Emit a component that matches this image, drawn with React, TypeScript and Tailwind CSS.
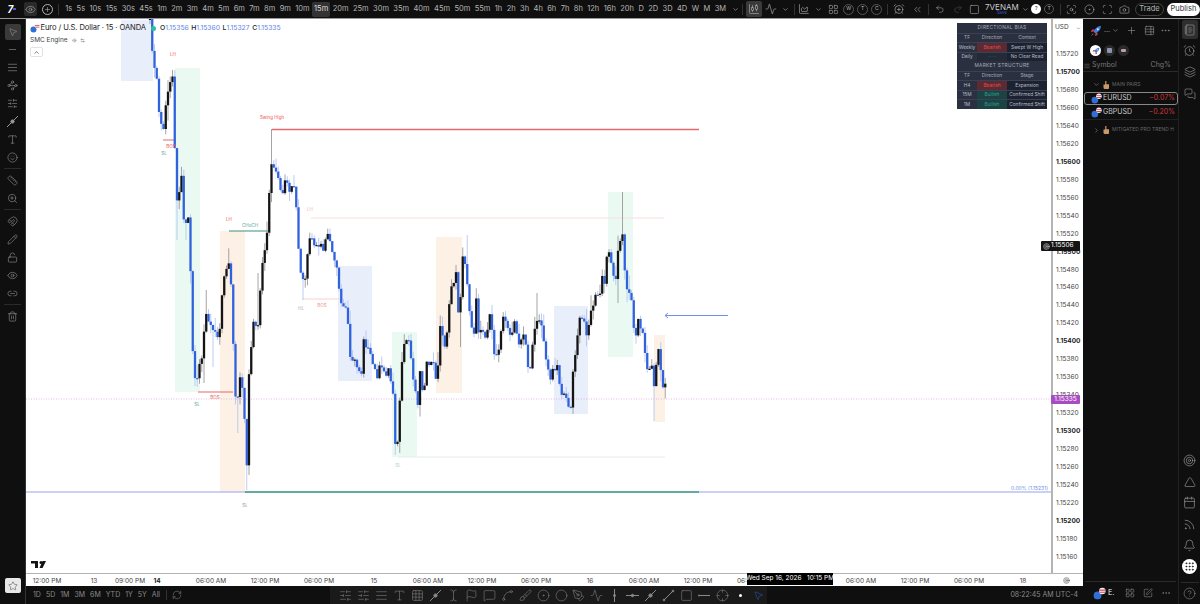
import {
  Activity, AlarmClock, AlarmClockPlus, AlignJustify, Bell, Brush, Calendar, Camera, ChartArea, ChartCandlestick,
  ChevronDown, ChevronRight, ChevronUp, ChevronsLeft, CircleDot, CircleHelp, Eye, Flag, Grid3x3, Grip, Layers,
  LayoutGrid, Link2, LockOpen, Magnet, MessageSquare, MessagesSquare, Minus, MousePointer2, NotebookText, PenTool,
  Pencil, Plus, Redo2, Ruler, Scan, ScanSearch, Settings2, SlidersHorizontal, Smile, Square, SquarePen, Star,
  TableProperties, Target, Trash2, Triangle, Type, Undo2, Waypoints, ZoomIn, Ellipsis, Rss, Spline,
  Crosshair, RefreshCw, TextCursor, Circle
} from "lucide-react";

const frames = "1s 5s 10s 15s 30s 45s 1m 2m 3m 4m 5m 6m 7m 8m 9m 10m 15m 20m 25m 30m 35m 40m 45m 50m 55m 1h 2h 3h 4h 6h 7h 8h 12h 16h 20h D 2D 3D 4D W M 3M".split(" ");

// price path traced from the chart, [x, y] in page pixels
const path: number[][] = [
  [150,20],[152,40],[153,70],[156,73],[158,87],[159,113],[163,133],[165,113],[168,93],[172,73],[174,72],[175,170],[177,203],[182,170],[184,227],[188,212],[190,260],[192,300],[193,370],[197,382],[198,365],[203,357],[205,312],[208,320],[212,333],[217,332],[219,337],[222,297],[223,277],[225,277],[230,258],[232,303],[233,333],[235,393],[237,408],[239,373],[243,387],[247,473],[248,385],[253,323],[258,328],[262,267],[266,247],[270,180],[272,160],[275,168],[279,183],[282,200],[285,183],[290,190],[295,190],[297,223],[300,273],[303,280],[306,280],[308,247],[311,232],[313,250],[320,245],[323,250],[327,237],[331,240],[333,260],[337,270],[340,303],[347,310],[350,353],[357,367],[362,372],[363,335],[368,350],[377,377],[378,368],[387,373],[388,367],[393,392],[395,440],[398,445],[400,393],[403,352],[408,335],[415,390],[418,402],[420,373],[423,393],[427,363],[430,372],[432,353],[436,383],[438,362],[440,327],[445,345],[448,323],[451,287],[456,275],[457,312],[460,307],[462,257],[466,267],[470,315],[474,337],[476,293],[479,337],[481,325],[486,340],[489,313],[493,340],[495,360],[500,342],[502,313],[508,330],[512,333],[515,323],[519,347],[525,328],[527,367],[531,367],[534,330],[537,318],[540,318],[543,333],[546,362],[550,377],[554,367],[558,365],[560,388],[565,400],[572,407],[573,372],[577,347],[578,322],[582,318],[587,333],[592,307],[595,298],[600,293],[602,278],[606,287],[607,248],[610,250],[613,278],[617,275],[618,247],[623,235],[624,268],[628,293],[631,287],[632,312],[635,343],[637,320],[642,328],[645,352],[648,375],[652,363],[655,398],[657,345],[660,360],[662,387],[665,380],[666,398]
];

const wickFix: { x: number; top?: number; bottom?: number }[] = [
  { x: 272, top: 129 }, { x: 622, top: 192 }, { x: 247, bottom: 490 }, { x: 468, top: 235 }, { x: 460, bottom: 347 },
  { x: 536, top: 293 }, { x: 257, top: 273 }, { x: 207, top: 290 }, { x: 205, bottom: 383 }, { x: 213, bottom: 367 },
  { x: 237, bottom: 433 }, { x: 233, top: 320 }, { x: 302, bottom: 300 }, { x: 654, bottom: 421 }, { x: 185, bottom: 240 },
  { x: 178, top: 160 }, { x: 178, bottom: 240 }, { x: 395, bottom: 455 }, { x: 572, bottom: 414 }, { x: 617, bottom: 303 }
];

function rnd(i: number) {
  const v = Math.sin(i * 12.9898) * 43758.5453;
  return v - Math.floor(v);
}

function yAt(x: number) {
  for (let i = 1; i < path.length; i++) {
    if (x <= path[i][0]) {
      const [x0, y0] = path[i - 1];
      const [x1, y1] = path[i];
      return y0 + ((y1 - y0) * (x - x0)) / Math.max(x1 - x0, 0.01);
    }
  }
  return path[path.length - 1][1];
}

const candles = (() => {
  const out: { x: number; o: number; c: number; top: number; bottom: number }[] = [];
  let prev = 20;
  for (let i = 0; 150 + i * 2.25 <= 666; i++) {
    const x = 150 + i * 2.25;
    const c = yAt(x) + (rnd(i) - 0.5) * 8;
    const lo = Math.min(prev, c);
    const hi = Math.max(prev, c);
    let top = lo - rnd(i + 300) * rnd(i + 500) * 16;
    let bottom = hi + rnd(i + 700) * rnd(i + 900) * 16;
    for (const f of wickFix) {
      if (Math.abs(f.x - x) < 1.2) {
        if (f.top) top = f.top;
        if (f.bottom) bottom = f.bottom;
      }
    }
    out.push({ x, o: prev, c, top: Math.max(top, 19), bottom });
    prev = c;
  }
  return out;
})();

const zones = [
  { x: 121, y: 20, w: 32, h: 61, fill: "#e9eefb" },
  { x: 175, y: 68, w: 25, h: 324, fill: "#eafaf3" },
  { x: 220, y: 231, w: 25, h: 261, fill: "#fdf0e5" },
  { x: 338, y: 266, w: 34, h: 115, fill: "#e9eefb" },
  { x: 392, y: 332, w: 25, h: 125, fill: "#eafaf3" },
  { x: 436, y: 237, w: 26, h: 156, fill: "#fdf0e5" },
  { x: 554, y: 306, w: 34, h: 108, fill: "#e9eefb" },
  { x: 608, y: 192, w: 25, h: 165, fill: "#eafaf3" },
  { x: 654, y: 335, w: 11, h: 87, fill: "#fdf0e5" }
];

const labels = [
  { x: 173, y: 56, t: "LH", c: "#ef5350" },
  { x: 272, y: 119, t: "Swing High", c: "#ef5350" },
  { x: 171, y: 148, t: "BOS", c: "#ef5350" },
  { x: 164, y: 155, t: "SL", c: "#4aa89a" },
  { x: 229, y: 221, t: "LH", c: "#ef5350" },
  { x: 250, y: 227, t: "CHoCH", c: "#4aa89a" },
  { x: 310, y: 211, t: "LH", c: "#f3b4b2" },
  { x: 301, y: 310, t: "HL", c: "#a8b0b8" },
  { x: 322, y: 307, t: "BOS", c: "#f08a88" },
  { x: 215, y: 399, t: "BOS", c: "#ef5350" },
  { x: 197, y: 406, t: "SL", c: "#4aa89a" },
  { x: 398, y: 467, t: "SL", c: "#a9d0c8" },
  { x: 245, y: 507, t: "SL", c: "#88a0a0" }
];

const prices = Array.from({ length: 29 }, (_, i) => 115720 - i * 20);

const ticks = [
  { x: 47, t: "12:00 PM" }, { x: 94, t: "13" }, { x: 130, t: "09:00 PM" }, { x: 157, t: "14", b: true }, { x: 211, t: "06:00 AM" },
  { x: 265, t: "12:00 PM" }, { x: 319, t: "06:00 PM" }, { x: 374, t: "15" }, { x: 428, t: "06:00 AM" }, { x: 482, t: "12:00 PM" },
  { x: 536, t: "06:00 PM" }, { x: 590, t: "16" }, { x: 644, t: "06:00 AM" }, { x: 698, t: "12:00 PM" }, { x: 752, t: "06:00 PM" },
  { x: 861, t: "06:00 AM" }, { x: 915, t: "12:00 PM" }, { x: 969, t: "06:00 PM" }, { x: 1023, t: "18" }
];

type Glyph = { size?: number; strokeWidth?: number };

function LineDots(_: Glyph) {
  return (
    <svg width="13" height="13" viewBox="0 0 13 13" fill="none" stroke="currentColor" strokeWidth="1">
      <path d="M1 12 12 1" />
      <circle cx="6.5" cy="6.5" r="1.6" fill="currentColor" />
    </svg>
  );
}

function PlainLine(_: Glyph) {
  return (
    <svg width="13" height="13" viewBox="0 0 13 13" fill="none" stroke="currentColor" strokeWidth="1">
      <path d="M2 11 11 2" />
      <circle cx="2" cy="11" r="0.9" />
      <circle cx="11" cy="2" r="0.9" />
    </svg>
  );
}

function DashDash(_: Glyph) {
  return (
    <svg width="13" height="13" viewBox="0 0 13 13" fill="none" stroke="currentColor" strokeWidth="1">
      <path d="M1 6.5h11" />
      <circle cx="1" cy="6.5" r="0.6" />
    </svg>
  );
}

function Vert(_: Glyph) {
  return (
    <svg width="13" height="13" viewBox="0 0 13 13" fill="none" stroke="currentColor" strokeWidth="1">
      <path d="M6.5 0v13" />
      <circle cx="6.5" cy="6.5" r="1" fill="currentColor" />
    </svg>
  );
}

function Hori(_: Glyph) {
  return (
    <svg width="13" height="13" viewBox="0 0 13 13" fill="none" stroke="currentColor" strokeWidth="1">
      <path d="M0 6.5h13" />
      <circle cx="6.5" cy="6.5" r="1.2" fill="currentColor" />
    </svg>
  );
}

function Pair({ size = 11 }: { size?: number }) {
  return (
    <svg width={size} height={size} viewBox="0 0 12 12" className="shrink-0">
      <circle cx="4.2" cy="7.8" r="3.6" fill="#2f6fd8" />
      <circle cx="8.6" cy="3.6" r="3" fill="#f4f4f4" />
      <path d="M5.8 2.4h5.6v1H5.8zM5.8 4.4h5.4v1H5.8z" fill="#d8404a" />
    </svg>
  );
}

function Rocket({ size = 12 }: { size?: number }) {
  return (
    <svg width={size} height={size} viewBox="0 0 12 12" className="shrink-0">
      <path d="M11 1C8 1 5 3 3.5 6.5L5.5 8.5C9 7 11 4 11 1Z" fill="#3f7be0" />
      <path d="M3.5 6.5 1 7l1-2.5h2.5ZM5.5 8.5 5 11l2.5-1V7.5Z" fill="#d8404a" />
      <circle cx="7.8" cy="4.2" r="1" fill="#e8eefc" />
      <path d="M3 8.5 1 11l2.5-2Z" fill="#f0a030" />
    </svg>
  );
}

function Hand() {
  return (
    <svg width="6" height="8" viewBox="0 0 6 8" className="shrink-0">
      <path d="M2.2 0h1.2v3.2H6V7a1 1 0 0 1-1 1H2a1.5 1.5 0 0 1-1.5-1.5V3.5h1.7Z" fill="#c99a68" />
    </svg>
  );
}

function ChartDrawing() {
  return (
    <svg className="absolute inset-0" width="1025" height="554" viewBox="26 19 1025 554">
      {zones.map((z) => (
        <rect key={z.x} x={z.x} y={z.y} width={z.w} height={z.h} fill={z.fill} />
      ))}
      <path d="M26 399h1025" stroke="#d9a8e0" strokeWidth="0.8" strokeDasharray="1 1.5" />
      <path d="M311 218h353" stroke="#f6dedd" />
      <path d="M398 457h267" stroke="#e3ece9" />
      <path d="M272 129.5h427" stroke="#e5686a" strokeWidth="1.5" />
      <path d="M163 140h11M198 392h35" stroke="#e5686a" strokeWidth="1.2" />
      <path d="M302 299h38" stroke="#f6d0cf" />
      <path d="M229 231h41" stroke="#3f8f7c" strokeWidth="1.2" />
      <path d="M26 492h220M699 492h352" stroke="#93a4ee" strokeWidth="1.2" />
      <path d="M245 492h454" stroke="#2f8f7c" strokeWidth="1.4" />
      <path d="M665 315.5h63M668 313l-3 2.5 3 2.5" stroke="#6f8fe8" fill="none" />
      {candles.map((k) => {
        const up = k.c < k.o;
        return (
          <g key={k.x}>
            <path d={"M" + k.x + " " + k.top + "V" + k.bottom} stroke={up ? "#9a9a9a" : "#b4c6f2"} strokeWidth="0.9" />
            <rect
              x={k.x - 1.15}
              y={Math.min(k.o, k.c)}
              width="2.3"
              height={Math.max(Math.abs(k.o - k.c), 1.2)}
              fill={up ? "#141414" : "#2f62dc"}
            />
          </g>
        );
      })}
      {labels.map((l) => (
        <text key={l.x + l.t} x={l.x} y={l.y} fontSize="4.5" fill={l.c} textAnchor="middle">
          {l.t}
        </text>
      ))}
      <text x="1048" y="490" fontSize="5" fill="#6f8fe8" textAnchor="end">
        0.00% (1.15231)
      </text>
      <path d="M31 561h7v7h-3v-4.5h-4ZM39.5 568l3-7h3.5l-3.5 7Z" fill="#131313" />
      <circle cx="41" cy="562.5" r="1.5" fill="#131313" />
    </svg>
  );
}

function BiasTable() {
  const cell = "flex items-center justify-center h-full";
  const row = "grid grid-cols-[20px_30px_40px] h-[9.5px] border-t border-[#3a4152]";
  const head = "h-[9.5px] flex items-center justify-center bg-[#2a3040] text-[#a8adb8] tracking-[0.3px]";
  const data = [
    { h: "DIRECTIONAL BIAS", third: "Context", rows: [["Weekly", "Bearish", "Swept W High"], ["Daily", "----", "No Clear Read"]] },
    { h: "MARKET STRUCTURE", third: "Stage", rows: [["H4", "Bearish", "Expansion"], ["15M", "Bullish", "Confirmed Shift"], ["1M", "Bullish", "Confirmed Shift"]] }
  ];
  return (
    <div className="absolute right-[4px] top-[4px] w-[90px] bg-[#1c2230] text-[4.8px] text-[#b8bcc6] leading-none">
      {data.map((d) => (
        <div key={d.h}>
          <div className={head}>{d.h}</div>
          <div className={row + " bg-[#2a3040] text-[#a8adb8]"}>
            <div className={cell}>TF</div>
            <div className={cell}>Direction</div>
            <div className={cell}>{d.third}</div>
          </div>
          {d.rows.map((r) => (
            <div key={r[0]} className={row}>
              <div className={cell + " bg-[#2a3040]"}>{r[0]}</div>
              <div
                className={
                  cell +
                  (r[1] === "Bearish"
                    ? " bg-[#5c2a33] text-[#e0504e]"
                    : r[1] === "Bullish"
                      ? " bg-[#1c4244] text-[#2ca58d]"
                      : " bg-[#232a38] text-[#4a5060]")
                }
              >
                {r[1]}
              </div>
              <div className={cell}>{r[2]}</div>
            </div>
          ))}
        </div>
      ))}
    </div>
  );
}

function Legend() {
  return (
    <div className="absolute left-[4px] top-[3px] text-[#222]">
      <div className="flex items-center h-[12px] whitespace-nowrap">
        <Pair size={10} />
        <span className="ml-[0.5px] text-[7.6px] tracking-[-0.1px]">Euro / U.S. Dollar · 15 · OANDA</span>
        <span className="ml-[5px] mr-[4px] w-[5px] h-[5px] rounded-full bg-[#2cbfa0]" />
        <div className="flex gap-[2.5px] text-[6.8px] font-medium">
          <span>O<span className="text-[#5f86e8] font-normal">1.15356</span></span>
          <span>H<span className="text-[#5f86e8] font-normal">1.15360</span></span>
          <span>L<span className="text-[#5f86e8] font-normal">1.15327</span></span>
          <span>C<span className="text-[#5f86e8] font-normal">1.15335</span></span>
        </div>
      </div>
      <div className="mt-[1px] flex items-center gap-[3px] h-[11px] text-[6.5px] text-[#444]">
        <span>SMC Engine</span>
        <Eye size={5} className="ml-[1px] text-[#777]" />
        <Settings2 size={5} className="text-[#777]" />
      </div>
      <div className="mt-[1px] w-[13px] h-[10px] border border-[#e2e2e2] rounded-[2px] bg-white flex items-center justify-center">
        <ChevronUp size={7} />
      </div>
    </div>
  );
}

function PriceAxis() {
  return (
    <div className="relative w-[32px] border-l-2 border-[#b4b4b4] bg-white text-[6.5px] text-[#444]">
      <div className="h-[18px] flex items-center justify-between px-[2px] text-[6.5px]">
        <span>USD</span>
        <ChevronDown size={5} />
      </div>
      <div className="mt-[9px]">
        {prices.map((p) => (
          <div key={p} className={"h-[17.96px] flex items-center pl-[3px] " + (p % 100 === 0 ? "font-bold text-[#222]" : "")}>
            {(p / 100000).toFixed(5)}
          </div>
        ))}
      </div>
      <div className="absolute left-[-12px] top-[222px] w-[39px] h-[10px] bg-[#141414] text-white rounded-[1px] flex items-center">
        <Target size={7} className="mx-[1.5px] text-[#bbb]" />
        <span>1.15506</span>
      </div>
      <div className="absolute left-[-2px] top-[376px] w-[29px] h-[9px] bg-[#a84cc2] text-white rounded-[1px] flex items-center justify-center">
        1.15335
      </div>
    </div>
  );
}

function TimeAxis() {
  return (
    <div className="relative h-[13px] border-t border-[#b4b4b4] bg-white text-[6.5px] text-[#444]">
      {ticks.map((t) => (
        <span
          key={t.x}
          className={"absolute top-[3px] -translate-x-1/2 whitespace-nowrap " + (t.b ? "font-bold text-[#222]" : "")}
          style={{ left: t.x - 26 }}
        >
          {t.t}
        </span>
      ))}
      <div className="absolute left-[721px] top-[-1px] w-[86px] h-[12px] bg-black text-white flex items-center justify-center whitespace-nowrap">
        Wed Sep 16, 2026 &nbsp; 10:15 PM
      </div>
      <Target size={7} className="absolute left-[1037px] top-[3px] text-[#666]" />
    </div>
  );
}

function TopBar() {
  return (
    <div className="h-[19px] shrink-0 flex items-center bg-[#0f0f0f] border-b border-[#9a9a9a] text-[#b4b4b4] text-[7.5px] whitespace-nowrap">
      <div className="w-[18px] ml-[3px] flex items-center justify-center text-white font-bold italic text-[10px]">
        7<span className="w-[3px] h-[2px] bg-[#2f62dc]" />
      </div>
      <div className="ml-[3px] w-[14px] h-[14px] bg-[#2a2a2a] rounded-[2px] flex items-center justify-center">
        <Eye size={11} strokeWidth={1.25} />
      </div>
      <div className="ml-[5px] w-[11px] h-[11px] rounded-full border border-[#b4b4b4] flex items-center justify-center">
        <Plus size={7} />
      </div>
      <div className="ml-[5px] w-px h-[11px] bg-[#333]" />
      <div className="ml-[4px] flex items-center gap-[0.4px]">
        {frames.map((f) => (
          <span key={f} className={"px-[2px] h-[15px] flex items-center rounded-[2px] " + (f === "15m" ? "bg-[#333] text-[#ddd]" : "")}>
            {f}
          </span>
        ))}
        <ChevronDown size={7} className="ml-[4px]" />
      </div>
      <div className="ml-[3px] w-px h-[11px] bg-[#333]" />
      <div className="ml-[3px] w-[16px] h-[16px] bg-[#3a3a3a] rounded-[2px] flex items-center justify-center">
        <ChartCandlestick size={12} strokeWidth={1.25} />
      </div>
      <Activity size={12} strokeWidth={1.25} className="ml-[3px]" />
      <ChevronDown size={7} className="ml-[5px]" />
      <div className="ml-[5px] w-px h-[11px] bg-[#333]" />
      <ChartArea size={12} strokeWidth={1.25} className="ml-[3px]" />
      <ChevronDown size={7} className="ml-[5px]" />
      <LayoutGrid size={11} strokeWidth={1.25} className="ml-[7px]" />
      <div className="ml-[4px] flex gap-[3px]">
        {["W", "T", "C"].map((x) => (
          <span key={x} className="w-[11px] h-[11px] rounded-full border border-[#555] text-[5px] flex items-center justify-center">
            {x}
          </span>
        ))}
      </div>
      <div className="ml-[5px] w-px h-[11px] bg-[#333]" />
      <AlarmClockPlus size={12} strokeWidth={1.25} className="ml-[5px]" />
      <ChevronsLeft size={11} strokeWidth={1.25} className="ml-[7px]" />
      <div className="ml-[5px] w-px h-[11px] bg-[#333]" />
      <Undo2 size={10} strokeWidth={1.25} className="ml-[6px]" />
      <Redo2 size={10} strokeWidth={1.25} className="ml-[8px] text-[#555]" />
      <Square size={11} strokeWidth={1.25} className="ml-[7px]" />
      <div className="ml-[4px] w-[36px] flex flex-col items-center leading-none">
        <span className="text-[8px] text-[#ccc]">7VENAM</span>
        <span className="text-[4.5px] text-[#3558c8]">Save</span>
      </div>
      <ChevronDown size={7} className="ml-[2px]" />
      <span className="ml-[3px] w-[10px] h-[10px] rounded-full bg-white text-[#222] text-[5px] flex items-center justify-center">?</span>
      <span className="ml-[3px] w-[10px] h-[10px] rounded-full border border-[#555] text-[5px] flex items-center justify-center">T</span>
      <div className="ml-[6px] w-px h-[11px] bg-[#333]" />
      <ScanSearch size={11} strokeWidth={1.25} className="ml-[5px]" />
      <CircleDot size={11} strokeWidth={1.25} className="ml-[7px]" />
      <Scan size={11} strokeWidth={1.25} className="ml-[7px]" />
      <Camera size={11} strokeWidth={1.25} className="ml-[7px]" />
      <span className="ml-[5px] w-[29px] h-[13px] rounded-full border border-[#444] flex items-center justify-center">Trade</span>
      <span className="ml-[3px] w-[34px] h-[13px] rounded-full bg-white text-[#333] flex items-center justify-center">Publish</span>
    </div>
  );
}

function LeftTools() {
  const top = [Minus, AlignJustify, Waypoints, SlidersHorizontal, LineDots, Type, Smile];
  const mid = [Ruler, ZoomIn];
  const low = [Magnet, Pencil, LockOpen, Eye, Link2];
  const I = "h-[18px] flex items-center justify-center";
  return (
    <div className="w-[26px] shrink-0 flex flex-col items-center text-[#9a9a9a] border-r border-[#333] pt-[5px]">
      <div className="w-[16px] h-[16px] bg-[#3a3a3a] rounded-[2px] flex items-center justify-center">
        <MousePointer2 size={10} strokeWidth={1.25} />
      </div>
      {top.map((Ic, i) => (
        <div key={i} className={I}>
          <Ic size={11} strokeWidth={1.25} />
        </div>
      ))}
      <div className="w-[17px] h-px bg-[#2a2a2a] my-[2px]" />
      {mid.map((Ic, i) => (
        <div key={i} className={I}>
          <Ic size={11} strokeWidth={1.25} />
        </div>
      ))}
      <div className="w-[17px] h-px bg-[#2a2a2a] my-[2px]" />
      {low.map((Ic, i) => (
        <div key={i} className={I}>
          <Ic size={11} strokeWidth={1.25} />
        </div>
      ))}
      <div className="w-[17px] h-px bg-[#2a2a2a] my-[2px]" />
      <div className={I}>
        <Trash2 size={11} strokeWidth={1.25} />
      </div>
      <div className="mt-auto mb-[11px] w-[16px] h-[15px] bg-[#e8e8e8] rounded-[2px] flex items-center justify-center">
        <Star size={10} strokeWidth={1} className="text-[#222]" />
      </div>
    </div>
  );
}

function BottomBar() {
  const tools = [
    SlidersHorizontal, SlidersHorizontal, AlignJustify, Type, Grid3x3, LineDots, TextCursor, Flag, MessageSquare, Spline, Brush,
    CircleDot, Circle, PenTool, Activity, Vert, Hori, LineDots, PlainLine, Square, DashDash, Crosshair
  ];
  return (
    <div className="h-[18px] shrink-0 flex items-center text-[#8a8a8a] text-[7px]">
      <div className="w-[304px] pl-[7px] flex items-center gap-[5px]">
        {"1D 5D 1M 3M 6M YTD 1Y 5Y All".split(" ").map((r) => (
          <span key={r}>{r}</span>
        ))}
        <div className="ml-[1px] w-px h-[10px] bg-[#333]" />
        <RefreshCw size={10} strokeWidth={1.25} />
      </div>
      <div className="w-[437px] h-full bg-[#1a1a1a] flex items-center pl-[7px]">
        {tools.map((Ic, i) => (
          <div key={i} className="w-[18px] flex items-center justify-center">
            <Ic size={13} strokeWidth={1} />
          </div>
        ))}
        <div className="w-[18px] flex items-center justify-center">
          <span className="w-[3px] h-[3px] rounded-full bg-white" />
        </div>
        <div className="w-[18px] flex items-center justify-center text-[#2f4fb0]">
          <MousePointer2 size={11} strokeWidth={1.25} />
        </div>
      </div>
      <span className="ml-auto mr-[5px] text-[7px]">08:22:45 AM UTC-4</span>
    </div>
  );
}

function Watchlist() {
  return (
    <div className="w-[95px] flex flex-col text-[#9a9a9a]">
      <div className="h-[21px] mt-[1px] flex items-center pl-[7px] pr-[7px]">
        <Rocket />
        <span className="ml-[2px] text-[7px]">...</span>
        <ChevronDown size={7} className="ml-[2px]" />
        <Plus size={11} strokeWidth={1.25} className="ml-[7px]" />
        <TableProperties size={11} strokeWidth={1.25} className="ml-[7px]" />
        <Ellipsis size={11} strokeWidth={1.25} className="ml-auto" />
      </div>
      <div className="h-[19px] flex items-center gap-[3px] pl-[7px]">
        <span className="w-[11px] h-[11px] rounded-full bg-white flex items-center justify-center">
          <Rocket size={8} />
        </span>
        <span className="w-[11px] h-[11px] rounded-full bg-[#2a2a2a] flex items-center justify-center">
          <span className="w-[5px] h-[5px] rounded-[1px] bg-[#8a96b0]" />
        </span>
        <span className="w-[11px] h-[11px] rounded-full bg-[#2a2a2a] flex items-center justify-center">
          <span className="w-[5px] h-[3px] rounded-[1px] bg-[#b8a0a8]" />
        </span>
      </div>
      <div className="h-[12px] flex items-center justify-between border-b border-[#2a2a2a] pl-[1px] pr-[7px] text-[7px] text-[#777]">
        <span className="flex items-center gap-[2px]">
          <AlignJustify size={6} />
          Symbol
        </span>
        <span>Chg%</span>
      </div>
      <div className="h-[20px] pt-[5px] flex items-center pl-[10px] gap-[3px] text-[5px] text-[#666]">
        <ChevronDown size={7} className="shrink-0 text-[#888]" />
        <Hand />
        <span>MAIN PAIRS</span>
      </div>
      <div className="h-[13px] ml-[1px] flex items-center border border-[#888] rounded-[3px] pl-[6px] pr-[2px] text-[7px]">
        <Pair />
        <span className="ml-[1px] text-[#ccc]">EURUSD</span>
        <span className="ml-auto text-[#c93a3a]">−0.07%</span>
      </div>
      <div className="h-[15px] ml-[1px] flex items-center pl-[7px] pr-[3px] text-[7px] border-b border-[#222]">
        <Pair />
        <span className="ml-[1px] text-[#ccc]">GBPUSD</span>
        <span className="ml-auto text-[#c93a3a]">−0.20%</span>
      </div>
      <div className="h-[20px] flex items-center pl-[10px] gap-[3px] text-[5px] text-[#666] whitespace-nowrap">
        <ChevronRight size={7} className="shrink-0 text-[#888]" />
        <Hand />
        <span>MITIGATED PRO TREND H</span>
      </div>
      <div className="mt-auto mx-[2px] border-t border-[#2a2a2a] h-[23px] flex items-center pl-[8px] pr-[5px]">
        <Pair size={13} />
        <span className="ml-[2px] text-[7px] font-semibold text-[#bbb]">E.</span>
        <LayoutGrid size={10} strokeWidth={1.25} className="ml-[11px]" />
        <SquarePen size={10} strokeWidth={1.25} className="ml-[8px]" />
        <Ellipsis size={10} strokeWidth={1.25} className="ml-auto" />
      </div>
    </div>
  );
}

function RightIcons() {
  const I = "h-[21.2px] flex items-center justify-center";
  return (
    <div className="w-[22px] border-l border-[#222] flex flex-col items-center text-[#9a9a9a]">
      <div className="mt-[1px] w-[16px] h-[19px] bg-[#2e2e2e] rounded-[2px] flex items-center justify-center">
        <NotebookText size={12} strokeWidth={1.25} />
      </div>
      <div className="h-[22px] flex items-center justify-center"><AlarmClock size={13} strokeWidth={1.25} /></div>
      <div className="h-[22px] flex items-center justify-center"><Layers size={12} strokeWidth={1.25} /></div>
      <div className="h-[22px] flex items-center justify-center"><MessagesSquare size={12} strokeWidth={1.25} /></div>
      <div className="mt-auto flex flex-col">
        <div className={I}><Target size={13} strokeWidth={1.25} /></div>
        <div className={I}><Triangle size={12} strokeWidth={1.25} /></div>
        <div className={I}><Calendar size={13} strokeWidth={1.25} /></div>
        <div className={I}><Rss size={13} strokeWidth={1.25} /></div>
        <div className={I}><Bell size={13} strokeWidth={1.25} /></div>
        <div className={I}>
          <span className="w-[15px] h-[15px] rounded-full bg-white text-[#222] flex items-center justify-center">
            <Grip size={11} />
          </span>
        </div>
      </div>
      <div className="mt-[5px] w-[18px] border-t border-[#2a2a2a] h-[22px] flex items-center justify-center">
        <CircleHelp size={13} strokeWidth={1} />
      </div>
    </div>
  );
}

export default function App() {
  return (
    <div className="w-[1200px] h-[604px] overflow-hidden flex flex-col bg-[#0f0f0f] [font-family:Inter,sans-serif]">
      <TopBar />
      <div className="flex flex-1 min-h-0">
        <LeftTools />
        <div className="w-[1057px] flex flex-col">
          <div className="flex flex-1 min-h-0">
            <div className="relative w-[1025px] bg-white overflow-hidden">
              <ChartDrawing />
              <Legend />
              <BiasTable />
            </div>
            <PriceAxis />
          </div>
          <TimeAxis />
          <BottomBar />
        </div>
        <Watchlist />
        <RightIcons />
      </div>
    </div>
  );
}
